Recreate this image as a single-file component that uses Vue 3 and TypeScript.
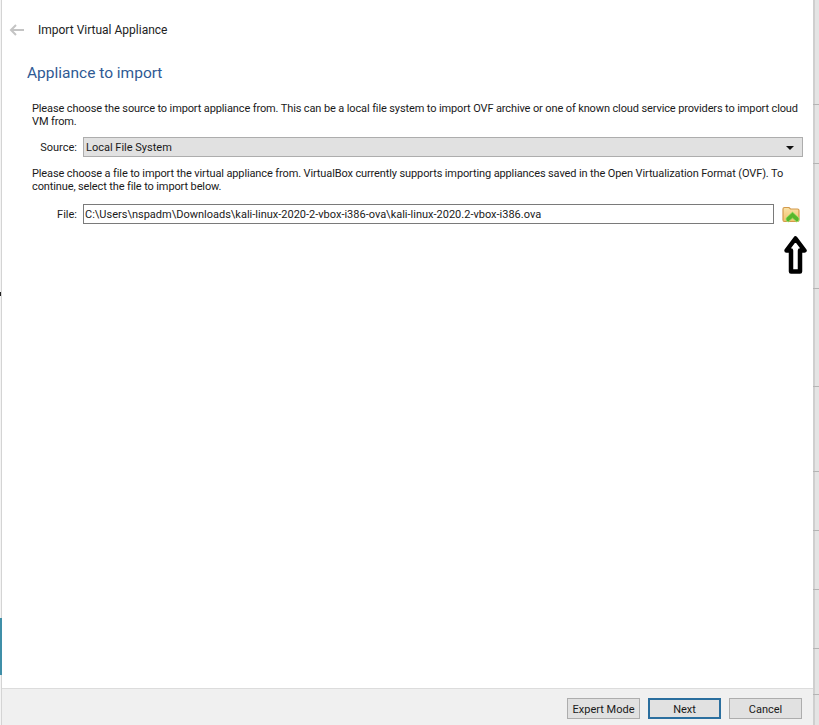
<script setup lang="ts">
const filePath = 'C:\\Users\\nspadm\\Downloads\\kali-linux-2020-2-vbox-i386-ova\\kali-linux-2020.2-vbox-i386.ova'
const rightTicks: number[] = [104, 163, 288, 386, 471, 530, 589, 648, 694]
</script>

<template>
  <div class="screen">
    <div class="left-edge"><div class="edge-mark"></div><div class="edge-tick"></div></div>
    <div class="window">
      <header class="titlebar">
        <svg class="back" width="16" height="12" viewBox="0 0 16 12" aria-hidden="true">
          <path d="M7 1 L2 6 L7 11 M2 6 H15" fill="none" stroke="#c4c4c4" stroke-width="2" />
        </svg>
        <span class="title">Import Virtual Appliance</span>
      </header>
      <main class="content">
        <h1 class="heading">Appliance to import</h1>
        <p class="para first">Please choose the source to import appliance from. This can be a local file system to import OVF archive or one of known cloud service providers to import cloud VM from.</p>
        <div class="row source-row">
          <label class="label">Source:</label>
          <div class="select">
            <span>Local File System</span>
            <span class="caret"></span>
          </div>
        </div>
        <p class="para second">Please choose a file to import the virtual appliance from. VirtualBox currently supports importing appliances saved in the Open Virtualization Format (OVF). To continue, select the file to import below.</p>
        <div class="row file-row">
          <label class="label">File:</label>
          <div class="input">{{ filePath }}</div>
          <svg class="folder" width="18" height="17" viewBox="0 0 18 17" aria-hidden="true">
            <defs>
              <linearGradient id="folderFill" x1="0" y1="0" x2="0" y2="1">
                <stop offset="0" stop-color="#f9e2a8" />
                <stop offset="1" stop-color="#f2c06a" />
              </linearGradient>
            </defs>
            <path d="M1 3 Q1 1.5 2.5 1.5 H7 L8.5 3 H15.5 Q17 3 17 4.5 V14 Q17 15.5 15.5 15.5 H2.5 Q1 15.5 1 14 Z" fill="url(#folderFill)" stroke="#d39a4c" stroke-width="1.2" />
            <path d="M10.5 6 L17 12 V14.5 L14.8 16 L10.5 12.2 L6.2 16 L4 14.5 V12 Z" fill="#58b62c" stroke="#a2e873" stroke-width=".8" />
          </svg>
        </div>
        <div class="arrow-row">
          <svg width="23" height="39" viewBox="0 0 23 39" aria-hidden="true">
            <path d="M11.5 3.5 L20.5 15.5 H16 V36.5 H7 V15.5 H2.5 Z" fill="#fff" stroke="#000" stroke-width="4.5" stroke-linejoin="round" />
          </svg>
        </div>
      </main>
      <footer class="footer">
        <button class="btn" type="button">Expert Mode</button>
        <button class="btn primary" type="button">Next</button>
        <button class="btn" type="button">Cancel</button>
      </footer>
    </div>
    <div class="right-edge">
      <div v-for="t in rightTicks" :key="t" class="right-tick" :style="{ top: t + 'px' }"></div>
    </div>
  </div>
</template>

<style>
html, body { margin: 0; background: #fff; overflow: hidden; }
</style>

<style scoped>
.screen {
  display: flex;
  width: 819px;
  height: 725px;
  font-family: Roboto, "Open Sans", sans-serif;
  font-size: 11px;
  color: #1a1a1a;
  background: #fff;
}
.left-edge {
  width: 1px;
  flex: none;
  border-right: 1px solid #d4d4d4;
  background: #f4f4f4;
  position: relative;
}
.edge-mark {
  position: absolute;
  left: 0;
  top: 618px;
  width: 2px;
  height: 57px;
  background: #3f8fa8;
}
.edge-tick {
  position: absolute;
  left: 0;
  top: 292px;
  width: 1px;
  height: 4px;
  background: #222;
}
.window {
  flex: 1;
  display: flex;
  flex-direction: column;
  min-width: 0;
}
.right-edge {
  width: 6px;
  flex: none;
  position: relative;
  background: linear-gradient(to right, #cfcfcf 0 2px, #e4e4e4 2px 6px);
}
.right-tick {
  position: absolute;
  left: 0;
  width: 6px;
  height: 1px;
  background: #b4b4b4;
}
.titlebar {
  height: 58px;
  display: flex;
  align-items: center;
  padding-left: 7px;
  padding-top: 1px;
  box-sizing: border-box;
}
.back { flex: none; }
.title {
  margin-left: 13px;
  font-size: 12px;
  color: #222;
  padding-top: 1px;
}
.content {
  flex: 1;
  padding: 0 10px 0 25px;
}
.heading {
  margin: 3px 0 0;
  font-size: 15.5px;
  line-height: 24px;
  font-weight: 400;
  color: #2f5a94;
}
.para {
  margin: 0;
  padding-left: 5px;
  line-height: 13px;
  letter-spacing: -0.12px;
}
.first { margin-top: 17px; }
.second { margin-top: 10px; }
.row {
  display: flex;
  align-items: center;
}
.label {
  width: 50px;
  flex: none;
  text-align: right;
  margin-right: 6px;
  padding-top: 1px;
}
.source-row { margin-top: 9px; }
.file-row { margin-top: 11px; }
.select {
  flex: 1;
  height: 20px;
  box-sizing: border-box;
  border: 1px solid #adadad;
  background: #e1e1e1;
  display: flex;
  align-items: center;
  justify-content: space-between;
  padding: 1px 8px 0 2px;
}
.caret {
  width: 0;
  height: 0;
  border-left: 4px solid transparent;
  border-right: 4px solid transparent;
  border-top: 4px solid #111;
}
.input {
  flex: 1;
  height: 20px;
  line-height: 19px;
  box-sizing: border-box;
  border: 1px solid #7a7a7a;
  padding: 0 1px;
  white-space: nowrap;
  overflow: hidden;
}
.folder {
  flex: none;
  margin-left: 8px;
  margin-right: 3px;
}
.arrow-row {
  display: flex;
  justify-content: flex-end;
  margin-right: -4px;
  margin-top: 11px;
}
.footer {
  height: 37px;
  box-sizing: border-box;
  border-top: 1px solid #dcdcdc;
  background: #f0f0f0;
  display: flex;
  justify-content: flex-end;
  align-items: flex-start;
  gap: 8px;
  padding: 9px 11px 0 0;
}
.btn {
  width: 73px;
  height: 21px;
  padding: 1px 0 0;
  font: inherit;
  color: #1a1a1a;
  background: #e1e1e1;
  border: 1px solid #adadad;
}
.primary {
  border: 2px solid #2b6f9f;
}
</style>
